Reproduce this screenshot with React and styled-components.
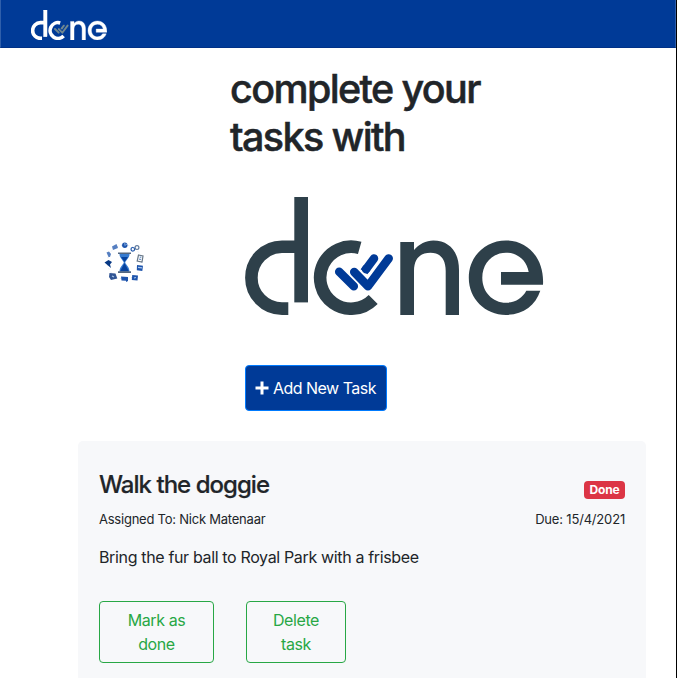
import React from "react";
import styled, { createGlobalStyle } from "styled-components";

const GlobalStyle = createGlobalStyle`
  *, *::before, *::after { box-sizing: border-box; }
  html, body { margin: 0; height: 678px; overflow: hidden; background: #fff; }
  body {
    font-family: Inter, "Liberation Sans", sans-serif;
    font-size: 16px;
    line-height: 24px;
    color: #212529;
  }
  h1, h2, p { margin: 0; font-weight: 500; }
`;

const Page = styled.div`
  height: 678px;
  border-right: 1px solid #000;
  overflow: hidden;
`;

const Navbar = styled.nav`
  height: 48px;
  padding: 10px 30px;
  background: #003a97;
  border-left: 1px solid #2f5fab;
  border-right: 1px solid #2f5fab;
  border-bottom: 1px solid #003187;
`;

const Hero = styled.header`
  display: grid;
  grid-template-columns: 125px 1fr;
  column-gap: 43px;
  padding: 17px 0 0 62px;
  height: 393px;
`;

const Emblem = styled.div`
  padding: 176px 0 0 42px;
  svg { display: block; }
`;

const HeroBody = styled.div`
  display: flex;
  flex-direction: column;
  align-items: flex-start;
`;

const Title = styled.h1`
  width: 270px;
  font-size: 39.5px;
  line-height: 48px;
  letter-spacing: -1.62px;
  white-space: nowrap;
  -webkit-text-stroke: 0.5px #212529;
`;

const LogoSlot = styled.div`
  margin: 36px 0 50px 15px;
  height: 118px;
`;

const LogoSvg = styled.svg`
  display: block;
`;

const AddButton = styled.button`
  display: flex;
  align-items: center;
  gap: 4px;
  width: 142px;
  height: 46px;
  margin-left: 15px;
  padding: 0 9px;
  border: 1px solid #007bff;
  border-radius: 4px;
  background: #003a97;
  color: #fff;
  font: 400 16px/24px Inter, sans-serif;
  letter-spacing: -0.52px;
  white-space: nowrap;
  svg { flex: none; }
`;

const Card = styled.section`
  width: 568px;
  height: 300px;
  margin-left: 78px;
  padding: 29px 21px;
  border-radius: 5px;
  background: #f7f8fa;
`;

const Row = styled.div`
  display: flex;
  justify-content: space-between;
  align-items: flex-start;
`;

const TaskTitle = styled.h2`
  font-size: 24px;
  line-height: 29px;
  letter-spacing: -0.97px;
  -webkit-text-stroke: 0.2px #212529;
`;

const Badge = styled.span`
  width: 41px;
  height: 18px;
  margin-top: 11px;
  border-radius: 4px;
  background: #dc3545;
  color: #fff;
  font-size: 12px;
  font-weight: 700;
  line-height: 18px;
  letter-spacing: -0.1px;
  text-align: center;
`;

const Meta = styled(Row)`
  margin-top: 10px;
  font-size: 13px;
  line-height: 20px;
`;

const MetaText = styled.span`
  letter-spacing: ${(p) => p.$tracking};
`;

const Description = styled.p`
  margin-top: 16px;
  font-weight: 400;
  letter-spacing: -0.35px;
`;

const Actions = styled.div`
  display: flex;
  gap: 32px;
  margin-top: 32px;
`;

const OutlineButton = styled.button`
  width: ${(p) => p.$width};
  height: 62px;
  padding: 6px 20px;
  border: 1px solid #28a745;
  border-radius: 4px;
  background: transparent;
  color: #28a745;
  font: 400 16px/24px Inter, sans-serif;
  letter-spacing: -0.4px;
`;

function DoneLogo({ width, height, color, check, checkWidth = 8.5, outline = 0 }) {
  return (
    <LogoSvg width={width} height={height} viewBox="245 197 298.5 118" preserveAspectRatio="none" role="img" aria-label="done">
      <g fill={color} stroke={color} strokeWidth={outline}>
        <rect x="294.3" y="197" width="13.7" height="105.4" />
        <path d="M400.3 242H414V250C419 244 426 240.4 433.3 240.4C449.5 240.4 459 252 459 270V315H445.7V271C445.7 259 440 252.7 430.5 252.7C420 252.7 414 259 414 271V315H400.3Z" />
        <path d="M543 284.7H501V272H528.7C526.5 260 517.5 252.7 506 252.7C492.5 252.7 482.3 263.5 482.3 277.7C482.3 292 492.5 302.7 506 302.7C515 302.7 522.5 298 526.3 290.7H540.3C535.5 305.5 522.5 314.9 506 314.9C485 314.9 468.8 298.7 468.8 277.7C468.8 256.6 485 240.4 506 240.4C527.5 240.4 544.5 258 543 284.7Z" />
      </g>
      <g fill="none" stroke={color} strokeWidth={12.6 + outline}>
        <path d="M296 246.7H282A30.6 30.95 0 0 0 282 308.6H288.3" />
        <path d="M359.7 247.9A31 31 0 1 0 373.2 299.5" />
      </g>
      <g fill="none" stroke={check} strokeWidth={checkWidth} strokeLinecap="round" strokeLinejoin="round">
        <path d="M339.2 271.8L353.8 286.2" />
        <path d="M354.2 272L368 286.3L388.7 258.4" />
        <path d="M374 258.5L366 269.2" />
        <path d="M367 267.8L364 271.8" strokeLinecap="butt" />
      </g>
    </LogoSvg>
  );
}

function HourglassEmblem() {
  return (
    <svg width="42" height="44" viewBox="104 241 42 44" aria-hidden="true">
      <circle cx="124.5" cy="262" r="17" fill="none" stroke="#a9bbdc" strokeWidth=".6" strokeDasharray=".8 3" />
      <path d="M119.5 254H129.5C129.5 258 126 260 125.2 262.5C126 265 129.5 267 129.5 271.5H119.5C119.5 267 123 265 123.8 262.5C123 260 119.5 258 119.5 254Z" fill="#367bd0" />
      <path d="M121 257H128L124.5 262Z M124.5 263L129 271.5H120Z" fill="#07439e" />
      <path d="M118 252.5H131V254H118Z M118 271.3H131V273H118Z" fill="#526781" />
      <g fill="#1e54ac">
        <circle cx="124.8" cy="245.3" r="2.7" />
        <path d="M112 246.5L116.5 244L118 248L113 250Z" opacity=".75" />
        <path d="M106.5 252.5L109 251.5L111 254L110 257H108.5Z" opacity=".75" />
        <path d="M104.5 262.5L108.5 260L112 262L110 264.5L111 268L108 265.5Z" fill="#073884" />
        <path d="M109.5 273L115.5 273.5L117.3 278.5L111 280L109 277Z" fill="#315594" />
        <path d="M121 276.5L128 277V281L126 282V280.8L121.5 280.5Z" />
        <path d="M132.2 275L138 275.5L137.5 280.5L131.8 280Z" />
        <path d="M137 265L143 265.8L142.3 271L136.8 270.2Z" />
      </g>
      <path d="M124.8 243V245.5L127 244" stroke="#7ca5dc" fill="none" />
      <g fill="none" strokeWidth="1.2">
        <circle cx="132.8" cy="249.3" r="1.8" stroke="#1d55aa" />
        <circle cx="137" cy="247.6" r="1.9" stroke="#617b9e" />
        <path d="M138.5 255L143 256L142 262L137.2 261Z" stroke="#677787" />
        <path d="M139.7 257L141.3 257.4M139 259.2L141 259.5" stroke="#668ec4" />
        <path d="M134 278L136 277.5M138 267.3L142 267.8M112 276L114 277" stroke="#a9c8ed" />
      </g>
    </svg>
  );
}

function PlusIcon() {
  return (
    <svg width="14" height="14" viewBox="0 0 14 14" aria-hidden="true">
      <path d="M7 2V12M2 7H12" stroke="#fff" strokeWidth="3" strokeLinecap="square" />
    </svg>
  );
}

export default function App() {
  return (
    <>
      <GlobalStyle />
      <Page>
        <Navbar>
          <DoneLogo width={76} height={30} color="#fff" check="#6f8790" checkWidth={7.5} outline={1.5} />
        </Navbar>
        <Hero>
          <Emblem><HourglassEmblem /></Emblem>
          <HeroBody>
            <Title>complete your<br />tasks with</Title>
            <LogoSlot>
              <DoneLogo width={298.5} height={118} color="#2e404a" check="#003a97" />
            </LogoSlot>
            <AddButton><PlusIcon />Add New Task</AddButton>
          </HeroBody>
        </Hero>
        <Card>
          <Row>
            <TaskTitle>Walk the doggie</TaskTitle>
            <Badge>Done</Badge>
          </Row>
          <Meta>
            <MetaText $tracking="-0.23px">Assigned To: Nick Matenaar</MetaText>
            <MetaText $tracking="-0.18px">Due: 15/4/2021</MetaText>
          </Meta>
          <Description>Bring the fur ball to Royal Park with a frisbee</Description>
          <Actions>
            <OutlineButton $width="115px">Mark as done</OutlineButton>
            <OutlineButton $width="100px">Delete task</OutlineButton>
          </Actions>
        </Card>
      </Page>
    </>
  );
}
